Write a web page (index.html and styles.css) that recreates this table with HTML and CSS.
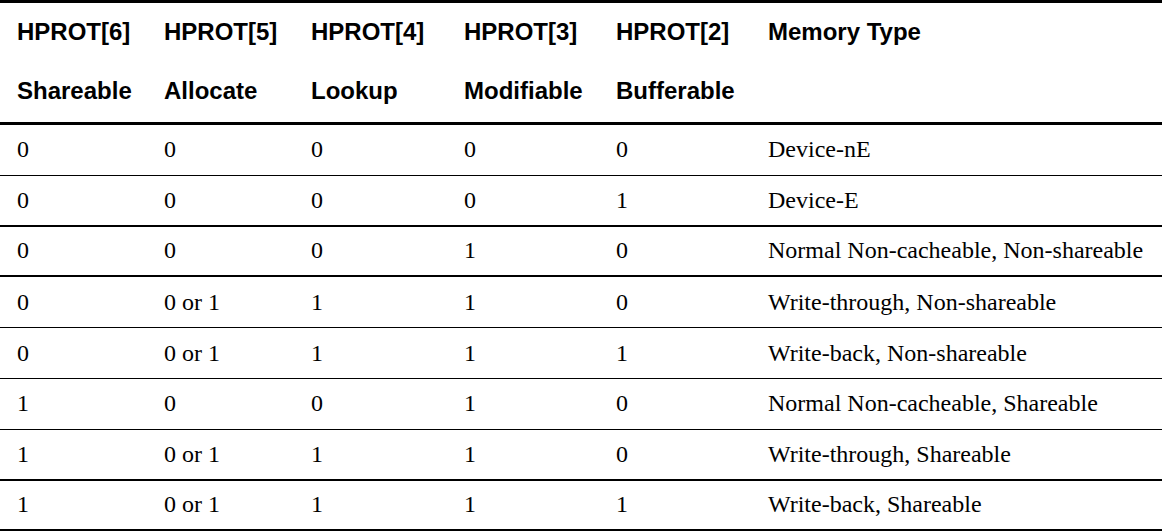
FILE: index.html
```html
<!DOCTYPE html>
<html>
<head>
<meta charset="utf-8">
<link rel="stylesheet" href="styles.css">
</head>
<body>
<div class="table">
  <div class="head">
    <div class="row hrow first"><div class="c">HPROT[6]</div><div class="c">HPROT[5]</div><div class="c">HPROT[4]</div><div class="c">HPROT[3]</div><div class="c">HPROT[2]</div><div class="c">Memory Type</div></div>
    <div class="row hrow second"><div class="c">Shareable</div><div class="c">Allocate</div><div class="c">Lookup</div><div class="c">Modifiable</div><div class="c">Bufferable</div><div class="c"></div></div>
  </div>
  <div class="row brow thin"><div class="c">0</div><div class="c">0</div><div class="c">0</div><div class="c">0</div><div class="c">0</div><div class="c">Device-nE</div></div>
  <div class="row brow thick"><div class="c">0</div><div class="c">0</div><div class="c">0</div><div class="c">0</div><div class="c">1</div><div class="c">Device-E</div></div>
  <div class="row brow thick"><div class="c">0</div><div class="c">0</div><div class="c">0</div><div class="c">1</div><div class="c">0</div><div class="c">Normal Non-cacheable, Non-shareable</div></div>
  <div class="row brow thin"><div class="c">0</div><div class="c">0 or 1</div><div class="c">1</div><div class="c">1</div><div class="c">0</div><div class="c">Write-through, Non-shareable</div></div>
  <div class="row brow thin"><div class="c">0</div><div class="c">0 or 1</div><div class="c">1</div><div class="c">1</div><div class="c">1</div><div class="c">Write-back, Non-shareable</div></div>
  <div class="row brow thin"><div class="c">1</div><div class="c">0</div><div class="c">0</div><div class="c">1</div><div class="c">0</div><div class="c">Normal Non-cacheable, Shareable</div></div>
  <div class="row brow thick"><div class="c">1</div><div class="c">0 or 1</div><div class="c">1</div><div class="c">1</div><div class="c">0</div><div class="c">Write-through, Shareable</div></div>
  <div class="row brow thick"><div class="c">1</div><div class="c">0 or 1</div><div class="c">1</div><div class="c">1</div><div class="c">1</div><div class="c">Write-back, Shareable</div></div>
</div>
</body>
</html>
```
FILE: styles.css
```css
html, body {
  margin: 0;
  padding: 0;
  background: #fff;
}
.table {
  width: 1162px;
  color: #000;
}
.head {
  border-top: 3px solid #000;
  border-bottom: 3px solid #000;
}
.row {
  display: grid;
  grid-template-columns: 147px 147px 153px 152px 152px 1fr;
  align-items: center;
  box-sizing: border-box;
}
.c {
  padding-left: 17px;
  white-space: nowrap;
}
.hrow {
  font-family: "Liberation Sans", Arial, sans-serif;
  font-weight: bold;
  font-size: 24px;
}
.hrow.first { height: 57px; }
.hrow.second { height: 62px; }
.brow {
  height: 50.8px;
  font-family: "Liberation Serif", "Times New Roman", serif;
  font-size: 24px;
}
.thin { border-bottom: 1px solid #000; }
.thick { border-bottom: 2px solid #000; }
```
